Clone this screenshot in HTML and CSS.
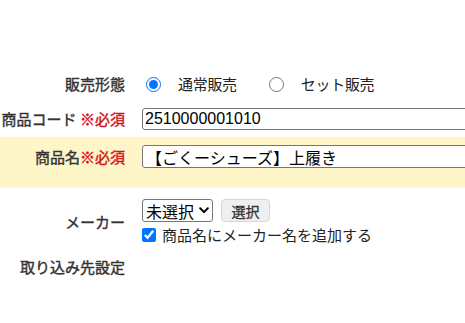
FILE: index.html
```html
<!DOCTYPE html>
<html lang="ja">
<head>
<meta charset="utf-8">
<link rel="stylesheet" href="styles.css">
</head>
<body>
<form class="form">
  <div class="row row-type">
    <div class="label">販売形態</div>
    <div class="field radios">
      <label class="radio"><input type="radio" name="type" checked><span>通常販売</span></label>
      <label class="radio"><input type="radio" name="type"><span>セット販売</span></label>
    </div>
  </div>
  <div class="row row-code">
    <div class="label">商品コード <span class="req">※必須</span></div>
    <div class="field clip"><input class="text num" type="text" value="2510000001010"></div>
  </div>
  <div class="row row-name">
    <div class="label">商品名<span class="req">※必須</span></div>
    <div class="field clip"><input class="text" type="text" value="【ごくーシューズ】上履き"></div>
  </div>
  <div class="row row-maker">
    <div class="label">メーカー</div>
    <div class="field stack">
      <div class="maker-line">
        <span class="select-wrap">
          <select class="select"><option>未選択</option></select>
          <svg class="chev" width="10" height="7" viewBox="0 0 10 7"><path d="M1.2 1.3 L5 5.1 L8.8 1.3" fill="none" stroke="#000" stroke-width="2" stroke-linecap="round" stroke-linejoin="round"/></svg>
        </span>
        <button type="button" class="btn">選択</button>
      </div>
      <label class="check"><input type="checkbox" checked><span>商品名にメーカー名を追加する</span></label>
    </div>
  </div>
  <div class="row row-import">
    <div class="label">取り込み先設定</div>
    <div class="field"></div>
  </div>
</form>
</body>
</html>
```
FILE: styles.css
```css
html, body {
  margin: 0;
  padding: 0;
  background: #fff;
  overflow: hidden;
}
body {
  font-family: "Noto Sans CJK JP", "Liberation Sans", sans-serif;
  color: #333;
  font-size: 15px;
}
.form {
  display: flex;
  flex-direction: column;
  padding-top: 72px;
}
.row {
  display: grid;
  grid-template-columns: 125px 1fr;
  column-gap: 17px;
  align-items: center;
}
.label {
  text-align: right;
  font-weight: normal;
  -webkit-text-stroke: 0.4px currentColor;
  white-space: nowrap;
  line-height: 20px;
  color: #333;
}
.req {
  color: #d4111a;
}
.field {
  min-width: 0;
}
.clip {
  overflow: hidden;
}
.row-type {
  height: 24px;
}
.radios {
  display: flex;
  align-items: center;
  gap: 28px;
}
.radio {
  display: flex;
  align-items: center;
  gap: 17px;
  line-height: 20px;
  color: #222;
}
.radio input {
  margin: 0 0 0 4px;
  width: 15px;
  height: 15px;
}
.radio span {
  letter-spacing: -0.3px;
}
.row-code {
  padding: 12px 0 7px;
}
.text {
  box-sizing: border-box;
  width: 340px;
  height: 22px;
  margin: 0;
  padding: 0 2px;
  border: 1px solid #767676;
  border-radius: 3px;
  font-family: "Liberation Sans", "Noto Sans CJK JP", sans-serif;
  font-size: 16px;
  color: #000;
  display: block;
}
.row-name {
  background: #fef6c8;
  padding: 8px 0 20px;
  align-items: start;
}
.row-name .label {
  line-height: 23px;
}
.row-name .text {
  height: 23px;
  font-family: "Noto Sans CJK JP", sans-serif;
  padding-left: 3px;
}
.row-maker {
  padding-top: 11px;
}
.stack {
  display: flex;
  flex-direction: column;
  gap: 4px;
}
.maker-line {
  display: flex;
  align-items: center;
  gap: 8px;
}
.select-wrap {
  display: grid;
  align-items: center;
}
.select-wrap > * {
  grid-area: 1 / 1;
}
.select {
  -webkit-appearance: none;
  appearance: none;
  box-sizing: border-box;
  height: 23px;
  width: 71px;
  margin: 0;
  font-family: "Noto Sans CJK JP", sans-serif;
  font-size: 16px;
  line-height: 20px;
  color: #000;
  border: 1px solid #767676;
  border-radius: 3px;
  background: #fff;
  padding: 0 0 0 3px;
}
.chev {
  justify-self: end;
  margin-right: 4px;
  pointer-events: none;
}
.btn {
  box-sizing: border-box;
  height: 23px;
  width: 49px;
  margin: 0;
  padding: 0;
  font-family: "Noto Sans CJK JP", sans-serif;
  font-size: 14px;
  -webkit-text-stroke: 0.3px currentColor;
  color: #333;
  background: #efefef;
  border: 1px solid #d6d6d6;
  border-radius: 4px;
}
.check {
  display: flex;
  align-items: center;
  gap: 6px;
  line-height: 18px;
  color: #222;
}
.check input {
  margin: 0;
  width: 14px;
  height: 14px;
}
.row-import {
  padding-top: 12px;
}
.row-import .label {
  line-height: 22px;
}
```
